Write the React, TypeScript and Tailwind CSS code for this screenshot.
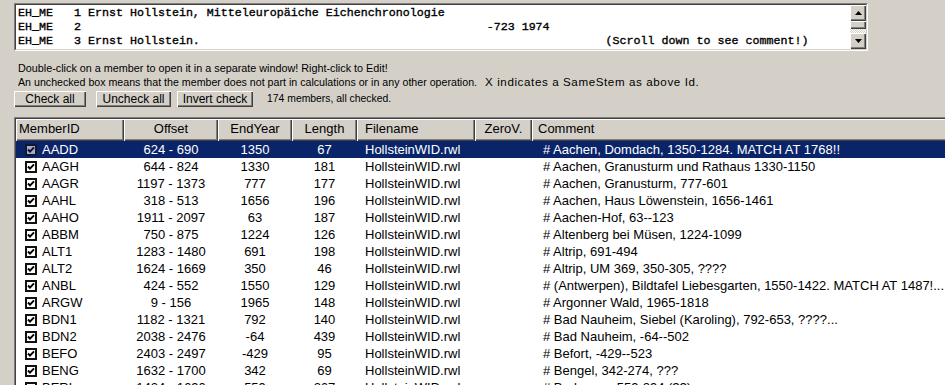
import React from "react";

const rows: string[][] = [
  ["AADD", "624 - 690", "1350", "67", "# Aachen, Domdach, 1350-1284. MATCH AT 1768!!"],
  ["AAGH", "644 - 824", "1330", "181", "# Aachen, Granusturm und Rathaus 1330-1150"],
  ["AAGR", "1197 - 1373", "777", "177", "# Aachen, Granusturm, 777-601"],
  ["AAHL", "318 - 513", "1656", "196", "# Aachen, Haus Löwenstein, 1656-1461"],
  ["AAHO", "1911 - 2097", "63", "187", "# Aachen-Hof, 63--123"],
  ["ABBM", "750 - 875", "1224", "126", "# Altenberg bei Müsen, 1224-1099"],
  ["ALT1", "1283 - 1480", "691", "198", "# Altrip, 691-494"],
  ["ALT2", "1624 - 1669", "350", "46", "# Altrip, UM 369, 350-305, ????"],
  ["ANBL", "424 - 552", "1550", "129", "# (Antwerpen), Bildtafel Liebesgarten, 1550-1422. MATCH AT 1487!..."],
  ["ARGW", "9 - 156", "1965", "148", "# Argonner Wald, 1965-1818"],
  ["BDN1", "1182 - 1321", "792", "140", "# Bad Nauheim, Siebel (Karoling), 792-653, ????..."],
  ["BDN2", "2038 - 2476", "-64", "439", "# Bad Nauheim, -64--502"],
  ["BEFO", "2403 - 2497", "-429", "95", "# Befort, -429--523"],
  ["BENG", "1632 - 1700", "342", "69", "# Bengel, 342-274, ???"],
  ["BERL", "1424 - 1690", "559", "267", "# Berlogem, 559-294 (??)"],
];

const sp = (n: number) => " ".repeat(n);

function CheckBox({ selected }: { selected: boolean }) {
  return (
    <div
      className={
        "w-[12px] h-[12px] border-2 flex items-center justify-center " +
        (selected ? "bg-[#a3abc6] border-[#101830]" : "bg-white border-[#111]")
      }
    >
      <svg width="8" height="8" viewBox="0 0 8 8">
        <polyline points="1,3.5 3,5.6 7,1.4" fill="none" stroke={selected ? "#0a1030" : "#000"} strokeWidth="2" />
      </svg>
    </div>
  );
}

function Arrow({ up }: { up: boolean }) {
  return (
    <div className="w-[16px] h-[16px] bg-[#d4d0c8] flex items-center justify-center shadow-[inset_1px_1px_0_#fff,inset_-1px_-1px_0_#404040,inset_-2px_-2px_0_#808080]">
      <svg width="7" height="4" viewBox="0 0 7 4">
        {up ? <polygon points="3.5,0 7,4 0,4" fill="#000" /> : <polygon points="0,0 7,0 3.5,4" fill="#000" />}
      </svg>
    </div>
  );
}

function Button({ label, w }: { label: string; w: string }) {
  return (
    <div
      className={
        "h-[16px] bg-[#d4d0c8] flex items-center justify-center text-[12px] leading-none shadow-[inset_1px_1px_0_#fff,inset_-1px_-1px_0_#404040,inset_-2px_-2px_0_#808080] " +
        w
      }
    >
      {label}
    </div>
  );
}

const headShadow =
  "shadow-[inset_1px_1px_0_#fff,inset_-1px_-1px_0_#404040,inset_-2px_-2px_0_#808080]";

export default function App() {
  return (
    <div
      className="w-[945px] h-[385px] overflow-hidden bg-[#d4d0c8] pt-[3px] text-black"
      style={{ fontFamily: '"Liberation Sans", Arial, sans-serif' }}
    >
      {/* Top text box */}
      <div className="ml-[14px] w-[854px] h-[48px] border-t border-l border-t-[#808080] border-l-[#808080] border-b border-r border-b-white border-r-white">
        <div className="w-full h-full border-t border-l border-t-[#404040] border-l-[#404040] border-b border-r border-b-[#d4d0c8] border-r-[#d4d0c8] bg-white flex">
          <div
            className="flex-1 pl-[2px] pt-[1px] text-[11.67px] leading-[14px] whitespace-pre overflow-hidden [-webkit-text-stroke:0.35px_black]"
            style={{ fontFamily: '"Liberation Mono", "Courier New", monospace' }}
          >
            <div>EH_ME   1 Ernst Hollstein, Mitteleuropäiche Eichenchronologie</div>
            <div>{"EH_ME   2" + sp(58) + "-723 1974"}</div>
            <div>{"EH_ME   3 Ernst Hollstein." + sp(58) + "(Scroll down to see comment!)"}</div>
          </div>
          <div className="w-[16px] flex flex-col bg-[#d4d0c8]">
            <Arrow up />
            <div className={"h-[8px] bg-[#d4d0c8] " + headShadow} />
            <div className="flex-1 bg-[repeating-conic-gradient(#fff_0_25%,#d4d0c8_0_50%)] bg-[length:2px_2px]" />
            <Arrow up={false} />
          </div>
        </div>
      </div>

      {/* Instructions */}
      <div className="ml-[18px] mt-[11px] text-[10.8px] leading-[13px] whitespace-pre">
        <div>Double-click on a member to open it in a separate window! Right-click to Edit!</div>
        <div className="flex items-baseline">
          <span className="text-[10.65px]">An unchecked box means that the member does not part in calculations or in any other operation.</span>
          <span className="ml-[8px] text-[11.6px] tracking-[0.6px] leading-[13px]">X indicates a SameStem as above Id.</span>
        </div>
      </div>

      {/* Buttons */}
      <div className="ml-[14px] mt-[2px] flex items-center">
        <Button label="Check all" w="w-[72px]" />
        <div className="w-[10px]" />
        <Button label="Uncheck all" w="w-[75px]" />
        <div className="w-[6px]" />
        <Button label="Invert check" w="w-[76px]" />
        <div className="ml-[14px] text-[10.4px] leading-none">174 members, all checked.</div>
      </div>

      {/* List */}
      <div className="ml-[14px] mt-[10px] w-[960px] h-[300px] border-t border-l border-t-[#808080] border-l-[#808080]">
        <div className="w-full h-full border-t border-l border-t-[#404040] border-l-[#404040] bg-white text-[13px]">
          <div className="flex h-[22px] leading-[20px]">
            <div className={"w-[108px] pl-[3px] bg-[#d4d0c8] " + headShadow}>MemberID</div>
            <div className={"w-[94px] text-center bg-[#d4d0c8] " + headShadow}>Offset</div>
            <div className={"w-[74px] text-center bg-[#d4d0c8] " + headShadow}>EndYear</div>
            <div className={"w-[65px] text-center bg-[#d4d0c8] " + headShadow}>Length</div>
            <div className={"w-[118px] pl-[8px] bg-[#d4d0c8] " + headShadow}>Filename</div>
            <div className={"w-[57px] text-center bg-[#d4d0c8] " + headShadow}>ZeroV.</div>
            <div className={"flex-1 pl-[6px] bg-[#d4d0c8] " + headShadow}>Comment</div>
          </div>
          {rows.map((r, i) => {
            const sel = i === 0;
            return (
              <div
                key={r[0]}
                className={"flex h-[17px] leading-[17px] whitespace-pre " + (sel ? "bg-[#0a246a] text-white" : "")}
              >
                <div className="w-[108px] flex items-center pl-[9px]">
                  <CheckBox selected={sel} />
                  <span className="ml-[5px]">{r[0]}</span>
                </div>
                <div className="w-[94px] text-center">{r[1]}</div>
                <div className="w-[74px] text-center">{r[2]}</div>
                <div className="w-[65px] text-center">{r[3]}</div>
                <div className="w-[118px] pl-[8px]">HollsteinWID.rwl</div>
                <div className="w-[57px]" />
                <div className="flex-1 pl-[11px]">{r[4]}</div>
              </div>
            );
          })}
        </div>
      </div>
    </div>
  );
}
